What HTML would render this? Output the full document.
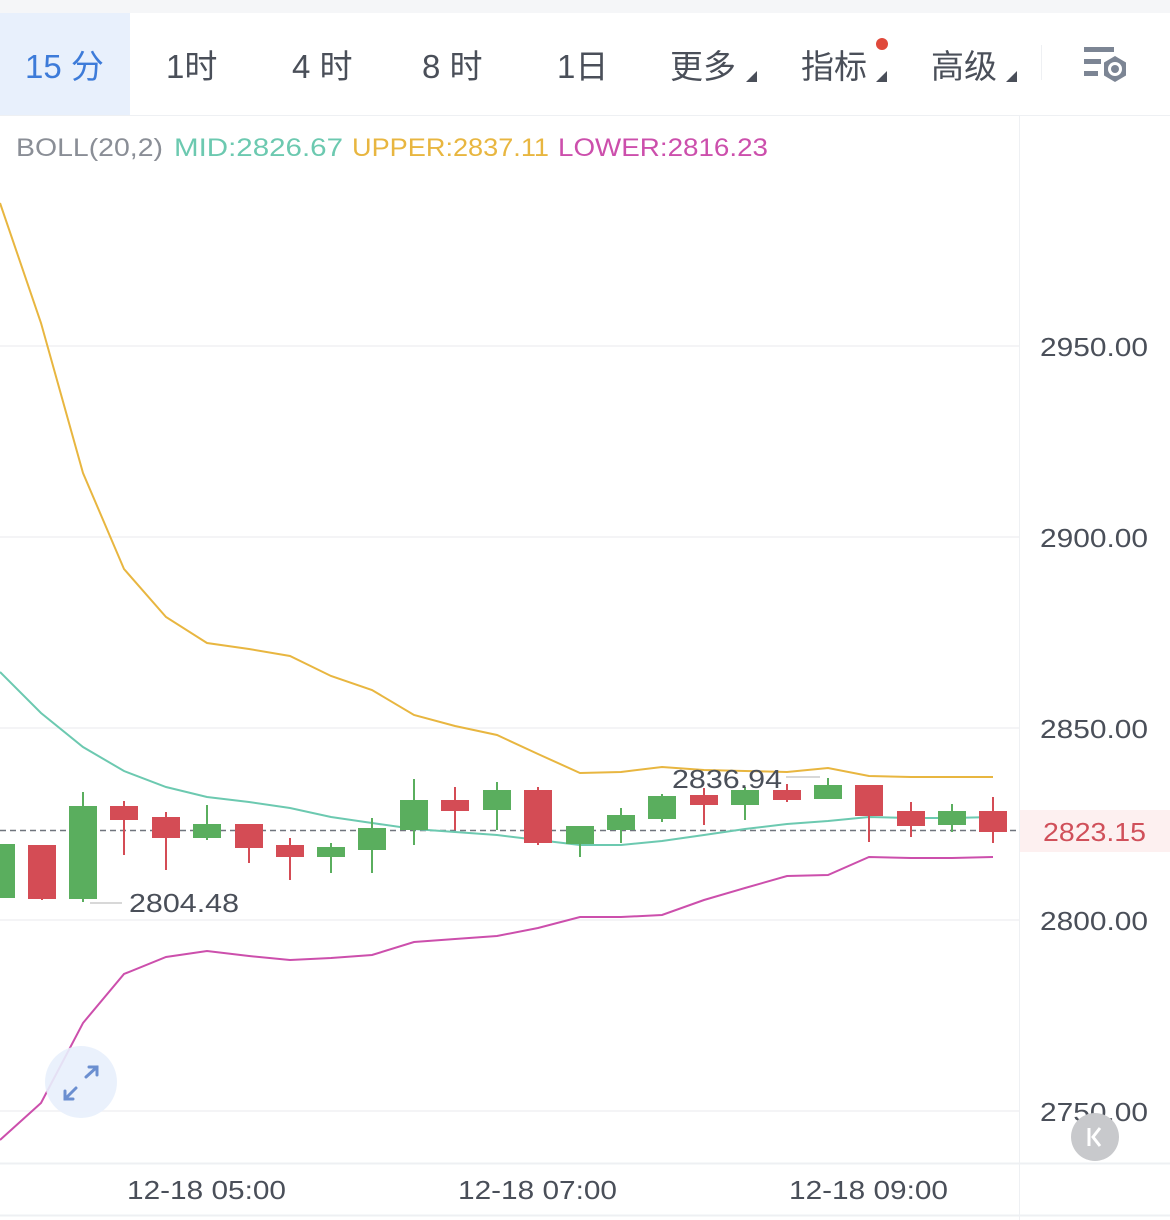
<!DOCTYPE html>
<html><head><meta charset="utf-8"><style>
html,body{margin:0;padding:0;background:#fff;width:1170px;height:1220px;overflow:hidden}
svg{display:block}
text{font-family:"Liberation Sans","Noto Sans CJK SC",sans-serif}
</style></head><body>
<svg width="1170" height="1220" viewBox="0 0 1170 1220" xmlns="http://www.w3.org/2000/svg">
<rect x="0" y="0" width="1170" height="13" fill="#f5f6f8"/>
<rect x="0" y="13" width="130" height="102" fill="#e8f0fc"/>
<line x1="0" y1="115.5" x2="1170" y2="115.5" stroke="#eef0f3"/>
<g font-size="33" fill="#4a4f59">
<text x="25" y="78" fill="#3d7bd9">15 分</text>
<text x="166" y="78">1时</text>
<text x="292" y="78">4 时</text>
<text x="422" y="78">8 时</text>
<text x="557" y="78">1日</text>
<text x="670" y="78">更多</text>
<text x="801" y="78">指标</text>
<text x="931" y="78">高级</text>
</g>
<g fill="#4a4f59">
<polygon points="746,82 757,82 757,71"/>
<polygon points="876,82 887,82 887,71"/>
<polygon points="1006,82 1017,82 1017,71"/>
</g>
<circle cx="882" cy="44" r="6" fill="#e0493b"/>
<line x1="1041.5" y1="45" x2="1041.5" y2="80" stroke="#eef0f3"/>
<g fill="#7c8594">
<rect x="1084" y="47" width="30" height="5"/>
<rect x="1084" y="59" width="17" height="5"/>
<rect x="1084" y="71" width="14" height="5"/>
</g>
<polygon points="1115,56 1126,62.5 1126,75.5 1115,82 1104,75.5 1104,62.5" fill="#7c8594"/>
<circle cx="1115" cy="69" r="7" fill="#fff"/>
<circle cx="1115" cy="69" r="4" fill="#7c8594"/>
<g font-size="25">
<text x="16" y="156" fill="#8a8e96" textLength="147" lengthAdjust="spacingAndGlyphs">BOLL(20,2)</text>
<text x="174" y="156" fill="#6cc9b0" textLength="169" lengthAdjust="spacingAndGlyphs">MID:2826.67</text>
<text x="352" y="156" fill="#e8b640" textLength="197" lengthAdjust="spacingAndGlyphs">UPPER:2837.11</text>
<text x="558" y="156" fill="#cc4fac" textLength="210" lengthAdjust="spacingAndGlyphs">LOWER:2816.23</text>
</g>
<line x1="1019.5" y1="116" x2="1019.5" y2="1220" stroke="#eef0f3"/>
<g stroke="#f0f1f4" stroke-width="1.5">
<line x1="0" y1="346" x2="1019" y2="346"/><line x1="0" y1="537" x2="1019" y2="537"/>
<line x1="0" y1="728" x2="1019" y2="728"/><line x1="0" y1="920" x2="1019" y2="920"/>
<line x1="0" y1="1111" x2="1019" y2="1111"/>
</g>
<line x1="0" y1="1163.5" x2="1170" y2="1163.5" stroke="#eef0f3" stroke-width="2"/>
<line x1="0" y1="1215.5" x2="1170" y2="1215.5" stroke="#eef0f3" stroke-width="2"/>
<g font-size="26" fill="#4a4f59" lengthAdjust="spacingAndGlyphs">
<text x="1040" y="356" textLength="108" lengthAdjust="spacingAndGlyphs">2950.00</text>
<text x="1040" y="547" textLength="108" lengthAdjust="spacingAndGlyphs">2900.00</text>
<text x="1040" y="738" textLength="108" lengthAdjust="spacingAndGlyphs">2850.00</text>
<text x="1040" y="930" textLength="108" lengthAdjust="spacingAndGlyphs">2800.00</text>
<text x="1040" y="1121" textLength="108" lengthAdjust="spacingAndGlyphs">2750.00</text>
<text x="127" y="1199" textLength="159" lengthAdjust="spacingAndGlyphs">12-18 05:00</text>
<text x="458" y="1199" textLength="159" lengthAdjust="spacingAndGlyphs">12-18 07:00</text>
<text x="789" y="1199" textLength="159" lengthAdjust="spacingAndGlyphs">12-18 09:00</text>
</g>
<rect x="1020" y="810" width="150" height="42" fill="#fdf0f0"/>
<text x="1043" y="841" font-size="26" fill="#d0505a" textLength="103" lengthAdjust="spacingAndGlyphs">2823.15</text>
<line x1="0" y1="830.5" x2="1019" y2="830.5" stroke="#70757e" stroke-width="1.5" stroke-dasharray="6,4"/>
<g stroke-width="2" fill="none">
<polyline stroke="#e8b640" points="0,203 41,323 83,473 124,569 166,617 207,643 249,649 290,656 331,676 372,690 414,715 455,726 497,735 538,754 580,773 621,772 662,767 704,770 745,771 787,772 828,768 869,776 911,777 952,777 993,777"/>
<polyline stroke="#6cc9b0" points="0,672 41,713 83,747 124,771 166,787 207,797 249,802 290,808 331,817 372,823 414,829 455,832 497,835 538,840 580,845 621,845 662,841 704,835 745,829 787,824 828,821 869,817 911,818 952,818 993,817"/>
<polyline stroke="#cc4fac" points="0,1140 41,1103 83,1023 124,974 166,957 207,951 249,956 290,960 331,958 372,955 414,942 455,939 497,936 538,928 580,917 621,917 662,915 704,900 745,888 787,876 828,875 869,857 911,858 952,858 993,857"/>
</g>
<g stroke-width="2">
<g fill="#5aae5e" stroke="#5aae5e">
<rect x="0" y="845" width="14" height="52"/>
<line x1="83" y1="792" x2="83" y2="902"/><rect x="70" y="807" width="26" height="91"/>
<line x1="207" y1="805" x2="207" y2="840"/><rect x="194" y="825" width="26" height="12"/>
<line x1="331" y1="843" x2="331" y2="873"/><rect x="318" y="848" width="26" height="8"/>
<line x1="372" y1="818" x2="372" y2="873"/><rect x="359" y="829" width="26" height="20"/>
<line x1="414" y1="779" x2="414" y2="845"/><rect x="401" y="801" width="26" height="28"/>
<line x1="497" y1="782" x2="497" y2="830"/><rect x="484" y="791" width="26" height="18"/>
<line x1="580" y1="827" x2="580" y2="857"/><rect x="567" y="827" width="26" height="16"/>
<line x1="621" y1="808" x2="621" y2="843"/><rect x="608" y="816" width="26" height="13"/>
<line x1="662" y1="794" x2="662" y2="822"/><rect x="649" y="797" width="26" height="21"/>
<line x1="745" y1="787" x2="745" y2="820"/><rect x="732" y="791" width="26" height="13"/>
<line x1="828" y1="778" x2="828" y2="798"/><rect x="815" y="786" width="26" height="12"/>
<line x1="952" y1="804" x2="952" y2="832"/><rect x="939" y="812" width="26" height="12"/>
</g>
<g fill="#d44c55" stroke="#d44c55">
<line x1="42" y1="846" x2="42" y2="900"/><rect x="29" y="846" width="26" height="52"/>
<line x1="124" y1="801" x2="124" y2="855"/><rect x="111" y="807" width="26" height="12"/>
<line x1="166" y1="812" x2="166" y2="870"/><rect x="153" y="818" width="26" height="19"/>
<line x1="249" y1="825" x2="249" y2="863"/><rect x="236" y="825" width="26" height="22"/>
<line x1="290" y1="838" x2="290" y2="880"/><rect x="277" y="846" width="26" height="10"/>
<line x1="455" y1="787" x2="455" y2="830"/><rect x="442" y="801" width="26" height="9"/>
<line x1="538" y1="787" x2="538" y2="845"/><rect x="525" y="791" width="26" height="51"/>
<line x1="704" y1="788" x2="704" y2="825"/><rect x="691" y="796" width="26" height="8"/>
<line x1="787" y1="784" x2="787" y2="802"/><rect x="774" y="791" width="26" height="8"/>
<line x1="869" y1="786" x2="869" y2="842"/><rect x="856" y="786" width="26" height="29"/>
<line x1="911" y1="802" x2="911" y2="837"/><rect x="898" y="812" width="26" height="13"/>
<line x1="993" y1="797" x2="993" y2="843"/><rect x="980" y="812" width="26" height="19"/>
</g>
</g>
<line x1="90" y1="903" x2="122" y2="903" stroke="#ccc" stroke-width="1.5"/>
<text x="129" y="912" font-size="26" fill="#4a4f59" textLength="110" lengthAdjust="spacingAndGlyphs">2804.48</text>
<line x1="786" y1="777" x2="820" y2="777" stroke="#ccc" stroke-width="1.5"/>
<text x="672" y="788" font-size="26" fill="#4a4f59" textLength="110" lengthAdjust="spacingAndGlyphs">2836.94</text>
<circle cx="81" cy="1082" r="36" fill="#e8f0fc" fill-opacity="0.9"/>
<g stroke="#6b8fd0" stroke-width="3" fill="none" stroke-linecap="round">
<path d="M86 1077 L97 1067 M89 1067 L97 1067 L97 1075"/>
<path d="M76 1088 L65 1099 M65 1091 L65 1099 L73 1099"/>
</g>
<circle cx="1095" cy="1137" r="24" fill="#c8c9cc"/>
<g stroke="#fff" stroke-width="3" fill="none"><path d="M1089 1128 L1089 1146 M1100 1128 L1093 1137 L1100 1146"/></g>
</svg>
</body></html>
